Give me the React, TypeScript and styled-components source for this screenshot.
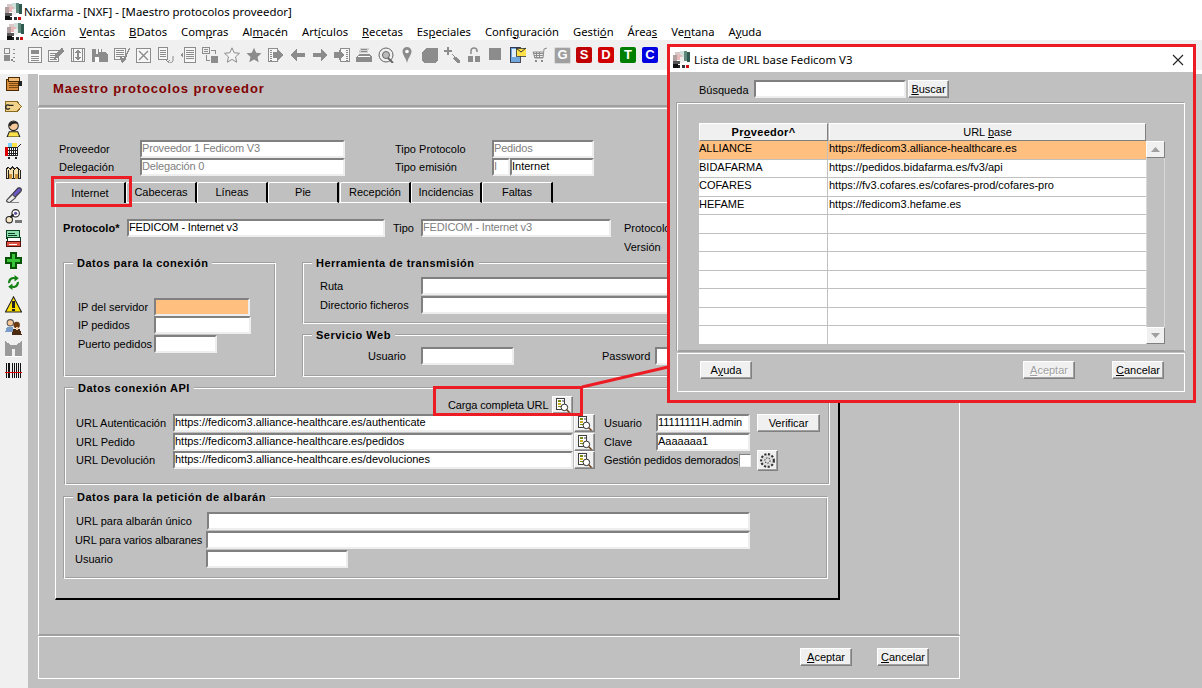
import React from "react";
import styled, { createGlobalStyle } from "styled-components";

const Global = createGlobalStyle`
  html, body { margin: 0; padding: 0; background: #c0c0c0; }
  body { font-family: "Liberation Sans", Arial, sans-serif; font-size: 11px; color: #000; }
  * { box-sizing: border-box; }
`;

const Screen = styled.div`
  position: relative; width: 1202px; height: 688px; overflow: hidden; background: #c0c0c0;
  display: flex; flex-direction: column;
`;
const TitleBar = styled.div`
  height: 22px; background: #fff; display: flex; align-items: center; padding-left: 5px; gap: 2px;
  font: 11.4px "Noto Sans", sans-serif;
`;
const MenuBar = styled.div`
  height: 18px; background: #fff; display: flex; align-items: center; padding-left: 7px;
  font: 11.23px "Noto Sans", sans-serif;
`;
const MenuList = styled.div`display: flex; gap: 14px; margin-left: 7px;`;
const MenuItem = styled.span`white-space: nowrap;`;
const Toolbar = styled.div`
  height: 34px; background: #f0f0f0; display: flex; align-items: center; padding: 0 0 3px 4px;
  border-bottom: 1px solid #fff; box-shadow: inset 0 -3px 0 #fff, inset 0 -2px 0 #000;
  flex: none;
`;
const ToolCell = styled.div`width: 22px; height: 16px; flex: none; display: flex;`;
const Body = styled.div`flex: 1; display: flex; min-height: 0;`;
const Sidebar = styled.div`
  width: 28px; background: #f0f0f0; padding: 2px 0 0 5px; display: flex; flex-direction: column; flex: none;
`;
const SideCell = styled.div`height: 22px; flex: none;`;
const Workspace = styled.div`padding-left: 10px; width: 932px; flex: none;`;

const HeaderPanel = styled.div`
  height: 33px; border: 1px solid #fff; border-bottom: 2px solid #a0a0a0; padding: 6px 0 0 14px;
  color: #800000; font-weight: bold; font-size: 13px; letter-spacing: 0.85px;
`;
const MainPanel = styled.div`
  margin-top: 1px; height: 528px; border: 1px solid #fff; border-bottom: 2px solid #a0a0a0; border-right-color: #fff;
  padding: 31px 0 0 16px;
`;
const FooterPanel = styled.div`
  height: 43px; border: 1px solid #fff; display: flex; justify-content: flex-end; gap: 25px; padding: 11px 30px 0 0;
`;
const TopForm = styled.div`display: grid; grid-template-columns: 81px 205px 50px 97px 102px; margin-left: 4px; grid-auto-rows: 18px;`;
const Gap = styled.span``;
const Row = styled.div<{ $ml?: number; $mt?: number; $h?: number }>`
  display: flex; align-items: center; height: ${p => p.$h ?? 18}px;
  margin-left: ${p => p.$ml ?? 0}px; margin-top: ${p => p.$mt ?? 0}px;
`;
const Label = styled.span<{ $w?: number; $ml?: number; $pt?: number; $tight?: boolean }>`
  flex: none; white-space: nowrap; padding-top: ${p => p.$pt ?? 0}px;
  width: ${p => (p.$w ? p.$w + "px" : "auto")}; margin-left: ${p => p.$ml ?? 0}px;
  letter-spacing: ${p => (p.$tight ? "-0.13px" : "0")};
`;
const BoldLabel = styled(Label)`font-weight: bold; letter-spacing: 0.1px;`;
const Input = styled.div<{ $w?: number; $ml?: number; $bg?: string; $muted?: boolean; $tight?: boolean }>`
  flex: none; height: 18px; width: ${p => (p.$w ? p.$w + "px" : "100%")}; margin-left: ${p => p.$ml ?? 0}px;
  background: ${p => p.$bg ?? "#fff"}; color: ${p => (p.$muted ? "#808080" : "#000")};
  border-style: solid; border-width: 2px; border-color: #808080 #eee #eee #808080;
  line-height: 13px; padding-left: 0; white-space: nowrap; overflow: hidden;
  letter-spacing: ${p => (p.$muted || p.$tight ? "-0.17px" : "0")};
`;
const Tabs = styled.div`display: flex; margin-top: 6px; height: 21px; position: relative; z-index: 1;`;
const Tab = styled.div<{ $w: number; $active?: boolean; $ml?: number }>`
  width: ${p => p.$w}px; margin-left: ${p => p.$ml ?? 0}px; height: 21px; flex: none;
  border-top: 1px solid #fff; border-left: 1px solid #fff; border-right: 2px solid #000;
  border-top-left-radius: 2px; border-bottom: ${p => (p.$active ? "none" : "1px solid #fff")};
  background: #c0c0c0; display: flex; align-items: center; justify-content: center; padding-bottom: 1px;
`;
const TabPage = styled.div`
  width: 785px; height: 398px; margin-top: -1px; border: 1px solid #fff; border-right: 2px solid #000; border-bottom: 2px solid #000;
  padding: 16px 0 0 8px;
`;
const Columns = styled.div`display: flex; gap: 27px; margin-top: 7px; align-items: flex-start;`;
const RightColumn = styled.div`display: flex; flex-direction: column; gap: 11px;`;
const Group = styled.div<{ $w: number; $h: number; $ml?: number; $mt?: number; $pl?: number; $pt?: number }>`
  position: relative; width: ${p => p.$w}px; height: ${p => p.$h}px; margin-left: ${p => p.$ml ?? 0}px; margin-top: ${p => p.$mt ?? 0}px;
  padding: ${p => p.$pt ?? 0}px 0 0 ${p => p.$pl ?? 0}px;
  border: 1px solid #fff; box-shadow: -1px -1px 0 #a0a0a0, inset -1px -1px 0 #a0a0a0;
`;
const Legend = styled.span`
  position: absolute; left: 8px; top: -8px; background: #c0c0c0; padding: 0 4px; font-weight: bold; letter-spacing: 0.5px; line-height: 14px; white-space: nowrap;
`;
const Btn = styled.div<{ $w: number; $h?: number; $ml?: number; $disabled?: boolean; $push?: boolean }>`
  width: ${p => p.$w}px; height: ${p => p.$h ?? 18}px; margin-left: ${p => (p.$push ? "auto" : (p.$ml ?? 0) + "px")}; flex: none;
  background: #f0f0f0; border: 1px solid; border-color: #fff #808080 #808080 #fff;
  box-shadow: inset -1px -1px 0 #a0a0a0;
  display: flex; align-items: center; justify-content: center; white-space: nowrap;
  color: ${p => (p.$disabled ? "#a0a0a0" : "#000")};
  text-shadow: ${p => (p.$disabled ? "1px 1px 0 #fff" : "none")};
`;
const Check = styled.div`width: 12px; height: 13px; flex: none; background: #fff; border: 1px solid; border-color: #808080 #eee #eee #808080;`;

/* Dialog */
const Dialog = styled.div`
  position: absolute; left: 667px; top: 44px; width: 529px; height: 359px; border: 3px solid #ed1c24;
  background: #c0c0c0; z-index: 5; display: flex; flex-direction: column;
`;
const DialogTitle = styled.div`
  height: 25px; background: #fff; display: flex; align-items: center; padding: 0 9px 0 3px; gap: 4px; flex: none;
  font: 11.4px "Noto Sans", sans-serif;
`;
const Close = styled.svg`margin-left: auto; width: 12px; height: 12px;`;
const SearchRow = styled.div`display: flex; margin: 8px 0 0 29px; align-items: center; height: 18px;`;
const DialogPanel = styled.div`
  margin: 5px 0 0 7px; width: 508px; height: 249px; border: 1px solid #fff; border-bottom: 2px solid #a0a0a0;
  box-shadow: -1px -1px 0 #a0a0a0; padding: 19px 0 0 21px; display: flex; align-items: flex-start;
`;
const DialogFooter = styled.div`
  margin: 1px 0 0 7px; width: 508px; height: 39px; border: 1px solid #fff; padding: 7px 20px 0 22px; display: flex; gap: 37px;
`;
const Table = styled.div`width: 447px; display: flex; flex-direction: column;`;
const HeadRow = styled.div`display: grid; grid-template-columns: 129px 317px; height: 18px; gap: 1px;`;
const Head = styled.div<{ $bold?: boolean }>`
  background: #f0f0f0; border: 1px solid; border-color: #fff #808080 #808080 #fff; display: flex; align-items: center; justify-content: center;
  font-weight: ${p => (p.$bold ? "bold" : "normal")}; letter-spacing: ${p => (p.$bold ? "0.3px" : "0")};
`;
const GridBody = styled.div`height: 203px; display: flex; flex-direction: column;`;
const GridRow = styled.div<{ $sel?: boolean }>`
  flex: 1; display: grid; grid-template-columns: 129px 1fr; background: ${p => (p.$sel ? "#ffbf7f" : "#fff")};
  border-bottom: 1px solid #c0c0c0; &:last-child { border-bottom: none; } line-height: 13px; padding-top: 1px;
`;
const Cell = styled.div`
  white-space: nowrap; overflow: hidden; margin-top: -1px; padding-top: 1px;
  &:first-child { border-right: 1px solid #c0c0c0; }
  &:last-child { padding-left: 1px; }
`;
const Scroll = styled.div`
  width: 19px; height: 203px; margin-top: 18px; flex: none; display: flex; flex-direction: column; justify-content: space-between;
  border-right: 1px solid #d8d8d8; border-left: 1px solid #d8d8d8;
`;
const ScrollBtn = styled.div`
  height: 17px; background: #f0f0f0; border: 1px solid; border-color: #fff #808080 #808080 #fff; display: flex; align-items: center; justify-content: center; margin: 0 -1px;
`;

const Annotations = styled.svg`position: absolute; left: 0; top: 0; width: 1202px; height: 688px; z-index: 4; pointer-events: none;`;

/* Icons */
const Ic = ({ children, w = 16, h = 16 }: { children: React.ReactNode; w?: number; h?: number }) => (
  <svg width={w} height={h} viewBox="0 0 16 16" shapeRendering="crispEdges" style={{ flex: "none", display: "block" }}>{children}</svg>
);
const G = "#8c8c8c";
const W = "#fff";

const Logo = () => (
  <Ic w={17} h={17}>
    <rect x="0" y="0" width="16" height="16" fill="#fff" />
    <rect x="2" y="1" width="5" height="3" fill="#d8c8c8" />
    <rect x="7" y="0" width="3" height="6" fill="#cfe0dc" />
    <rect x="10" y="0" width="3" height="9" fill="#5f8a7c" />
    <rect x="13" y="1" width="3" height="9" fill="#2f5a50" />
    <rect x="0" y="4" width="4" height="5" fill="#b0a0a0" />
    <rect x="4" y="4" width="4" height="4" fill="#e8b8b8" />
    <rect x="7" y="6" width="3" height="5" fill="#eee" />
    <rect x="0" y="9" width="7" height="3" fill="#555" />
    <rect x="0" y="12" width="5" height="4" fill="#111" />
    <rect x="5" y="13" width="2" height="3" fill="#222" />
    <rect x="8" y="13" width="3" height="3" fill="#333" />
    <rect x="12" y="13" width="3" height="3" fill="#d01010" />
  </Ic>
);
const Lines = ({ x, y, w, n, gap = 2 }: { x: number; y: number; w: number; n: number; gap?: number }) => (
  <>{Array.from({ length: n }).map((_, i) => <rect key={i} x={x} y={y + i * gap} width={w} height="1" fill={G} />)}</>
);
const Frame = ({ x, y, w, h }: { x: number; y: number; w: number; h: number }) => (
  <rect x={x + 0.5} y={y + 0.5} width={w - 1} height={h - 1} fill="#f7f7f7" stroke={G} />
);
const Pix = ({ d, f = G }: { d: string; f?: string }) => <path d={d} fill={f} />;

const toolIcons: React.ReactNode[] = [
  <><rect x="0.5" y="1.5" width="5" height="5" fill="none" stroke={G} /><rect x="0" y="8" width="6" height="6" fill={G} /><Lines x={9} y={2} w={2} n={4} gap={4} /><rect x="7" y="12" width="2" height="2" fill={G} /></>,
  <g transform="translate(2 0)"><Frame x={0} y={0} w={14} h={16} /><rect x="3" y="3" width="8" height="4" fill={G} /><Lines x={3} y={9} w={8} n={3} /></g>,
  <><Frame x={0} y={3} w={11} h={12} /><Lines x={2} y={6} w={7} n={4} /><Pix d="M15 1l1 3-7 7-3 1 1-4 6-7z" /></>,
  <><Frame x={1} y={1} w={14} h={14} /><rect x="3" y="2" width="1" height="12" fill={G} /><rect x="12" y="2" width="1" height="12" fill={G} /><Pix d="M8 2l3 4H9v4h2l-3 4-3-4h2V6H5z" /></>,
  <><Pix d="M0 2h4v5h2V2h4v3h3l3 3v7H0z" /><rect x="3" y="10" width="4" height="5" fill={W} /><rect x="7" y="2" width="2" height="3" fill={W} /></>,
  <><Frame x={0} y={1} w={12} h={12} /><Lines x={2} y={3} w={8} n={4} /><Pix d="M15 1l1 1-6 13-2 1-2-6 2-1 1 3z" /></>,
  <><Frame x={0} y={1} w={15} h={15} /><path d="M3 4l9 9M12 4l-9 9" stroke={G} strokeWidth="1.4" shapeRendering="auto" /></>,
  <><Frame x={0} y={0} w={10} h={13} /><Lines x={2} y={3} w={6} n={4} /><path d="M15 9v3a3 3 0 0 1-5 3M8 13l2 2 2-2" stroke={G} fill="none" shapeRendering="auto" /></>,
  <><Frame x={4} y={0} w={12} h={16} /><Lines x={6} y={3} w={8} n={5} /><Pix d="M0 8l3-3v6z" /></>,
  <><rect x="0.5" y="0.5" width="7" height="6" fill="none" stroke={G} /><Lines x={2} y={2} w={4} n={2} /><rect x="9" y="9" width="7" height="7" fill={G} /><path d="M4 8v5h4M9 3h4v4" stroke={G} fill="none" /></>,
  <path d="M8 .8l2.2 5 5.3.5-4 3.6 1.2 5.3L8 12.4l-4.7 2.8 1.2-5.3-4-3.6 5.3-.5z" fill="#f4f4f4" stroke={G} shapeRendering="auto" />,
  <path d="M8 .8l2.2 5 5.3.5-4 3.6 1.2 5.3L8 12.4l-4.7 2.8 1.2-5.3-4-3.6 5.3-.5z" fill={G} shapeRendering="auto" />,
  <><Frame x={0} y={1} w={10} h={14} /><Lines x={2} y={3} w={2} n={6} /><Pix d="M5 5h4V2l6 6-6 6v-3H5z" /></>,
  <Pix d="M0 8l7-6v4h8v4H7v4z" />,
  <Pix d="M16 8L9 2v4H1v4h8v4z" />,
  <><Frame x={6} y={1} w={10} h={14} /><Lines x={12} y={3} w={2} n={6} /><Pix d="M0 5h5V2l5 6-5 6v-3H0z" /></>,
  <><Pix d="M3 7h10l3 3v5H0v-5z" /><Pix d="M4 1h9l-1 5H3z" f="#d0d0d0" /><Lines x={5} y={2} w={6} n={2} /><rect x="2" y="9" width="12" height="1" fill={W} /></>,
  <><circle cx="8" cy="8" r="7" fill="#efefef" stroke="#666" shapeRendering="auto" /><circle cx="8" cy="8" r="3.5" fill="#bbb" stroke="#666" shapeRendering="auto" /><path d="M10 11l5 5" stroke="#666" strokeWidth="2" shapeRendering="auto" /></>,
  <g transform="translate(-1 0)"><path d="M8 0a4.5 4.5 0 0 1 4.5 4.5C12.5 8 9 11 8 16 7 11 3.5 8 3.5 4.5A4.5 4.5 0 0 1 8 0z" fill={G} shapeRendering="auto" /><circle cx="8" cy="4.5" r="1.8" fill={W} shapeRendering="auto" /></g>,
  <Pix d="M4 1h11l1 1v11l-3 3H2L0 14V6z" />,
  <><Pix d="M3 0h2v3h3v2H5v3H3V5H0V3h3z" /><Pix d="M8 7l3 3 1-1 4 5v2h-3l-4-5 1-1-3-3z" /></>,
  <><Pix d="M2 9h5v6H2zM9 9h5v6H9z" /><path d="M5 7V4a3 3 0 0 1 6 0v1" stroke={G} strokeWidth="1.5" fill="none" shapeRendering="auto" /></>,
  <rect x="1" y="1" width="12" height="12" fill={G} />,
  <><rect x="0" y="0" width="10" height="15" fill="#6fa8dc" stroke="#223" strokeWidth=".8" /><rect x="1.5" y="2" width="7" height="8" fill="#dfeefc" /><rect x="6" y="1" width="10" height="8" fill="#ffe14a" stroke="#333" strokeWidth=".8" /><path d="M6 1l5 4 5-4" stroke="#333" fill="none" shapeRendering="auto" /></>,
  <><path d="M15 1l-3 1-1 9H3L1 5h10" stroke={G} fill="none" shapeRendering="auto" /><Lines x={2} y={6} w={9} n={3} /><rect x="4" y="5" width="1" height="6" fill={G} /><rect x="7" y="5" width="1" height="6" fill={G} /><rect x="3" y="13" width="2" height="2" fill={G} /><rect x="9" y="13" width="2" height="2" fill={G} /></>,
];

const BadgeBox = styled.div<{ $c: string }>`
  width: 16px; height: 16px; background: ${p => p.$c}; border-radius: 2px; color: #fff; font: bold 13px/16px "Liberation Sans", sans-serif; text-align: center;
`;
const BadgeG = styled(BadgeBox)`width: 17px; height: 17px; border: 1px solid #d8d8d8; line-height: 14px;`;

const sideIcons: React.ReactNode[] = [
  <><rect x="1" y="3" width="12" height="11" fill="#d98c3a" stroke="#4a2a00" /><rect x="3" y="1" width="11" height="4" fill="#f2bb78" stroke="#4a2a00" /><path d="M4 7h8M4 9h8M4 11h8" stroke="#7a4a10" /><rect x="13" y="5" width="3" height="4" fill="#222" /></>,
  <><path d="M.5 3.5h11l4 4.5-4 4.5H.5z" fill="#f2d38c" stroke="#8a6a20" /><path d="M8 7H4a2 2 0 1 0 .5 2.5" fill="none" stroke="#222" strokeWidth="1.2" shapeRendering="auto" /></>,
  <><circle cx="8" cy="5.5" r="4.5" fill="#f7c99a" stroke="#222" shapeRendering="auto" /><path d="M3.5 5C4 1 12 0 12.5 4 10 3 7 3 5 6z" fill="#222" shapeRendering="auto" /><path d="M2 16l2-5h8l2 5z" fill="#ffe14a" stroke="#222" shapeRendering="auto" /></>,
  <><rect x="2" y="5" width="10" height="8" fill="#fff" stroke="#222" /><path d="M4 5v8M6 5v8M8 5v8M10 5v8M2 8h10M2 10.5h10" stroke="#222" /><rect x="3" y="1" width="4" height="4" fill="#7fd0ff" /><rect x="7" y="1" width="4" height="4" fill="#ffe14a" /><rect x="0" y="5" width="3" height="8" fill="#d00" /><path d="M12 5l3-3" stroke="#222" /><rect x="3" y="14" width="2" height="2" fill="#222" /><rect x="9" y="14" width="2" height="2" fill="#222" /></>,
  <><path d="M1 14V5l2-2 2 2 2-2 2 2 2-2 2 2 2 1v8z" fill="#f6dfa8" stroke="#222" /><rect x="4" y="9" width="3" height="5" fill="#c9923f" /><rect x="9" y="9" width="3" height="5" fill="#c9923f" /><path d="M3 6v8M8 6v8M13 6v8" stroke="#222" /></>,
  <><path d="M2 13L12 2c3-1 4 1 3 3L5 15c-3 1-4-1-3-2z" fill="#6a5bc2" stroke="#333" shapeRendering="auto" /><path d="M2 13l5-5 3 3-5 4c-3 1-4-1-3-2z" fill="#eee" stroke="#555" shapeRendering="auto" /><path d="M6 15h8l-2 1H5z" fill="#888" /></>,
  <><circle cx="4" cy="11" r="3" fill="#f6e7c8" stroke="#222" shapeRendering="auto" /><circle cx="10" cy="5" r="3.5" fill="#fff" stroke="#222" shapeRendering="auto" /><circle cx="10" cy="5" r="1.5" fill="#5a4fa0" shapeRendering="auto" /><path d="M5 9l3-3" stroke="#222" strokeWidth="2" shapeRendering="auto" /><rect x="9" y="11" width="7" height="3" fill="#777" /></>,
  <><rect x="1" y="0.5" width="13" height="7" fill="#8fe0b0" stroke="#0a4020" /><path d="M3 3h6M3 5h8" stroke="#0a4020" /><rect x="2" y="7" width="13" height="4" fill="#fff" stroke="#0a4020" /><rect x="1" y="11" width="14" height="4.5" fill="#e05040" stroke="#501010" /><rect x="4" y="13" width="7" height="1" fill="#fff" /></>,
  <path d="M5.5 1h5v4.5H15v5h-4.5V15h-5v-4.5H1v-5h4.5z" fill="#37c437" stroke="#055505" strokeWidth="1.5" />,
  <><path d="M3 9a5 5 0 0 1 6-6V1l4 3-4 3V5a3 3 0 0 0-4 3z" fill="#128012" shapeRendering="auto" /><path d="M13 7a5 5 0 0 1-6 6v2l-4-3 4-3v2a3 3 0 0 0 4-3z" fill="#128012" shapeRendering="auto" /></>,
  <><path d="M8 .8L15.5 15H.5z" fill="#ffe100" stroke="#222" shapeRendering="auto" /><rect x="7" y="5" width="2" height="6" fill="#222" /><rect x="7" y="12" width="2" height="2" fill="#222" /></>,
  <><circle cx="5" cy="4.5" r="3" fill="#f7c99a" stroke="#555" shapeRendering="auto" /><path d="M0 13l2-5h5l2 5z" fill="#7a9cc8" /><circle cx="11" cy="6.5" r="3" fill="#6b3a10" shapeRendering="auto" /><path d="M6 16l2-6h6l2 6z" fill="#4a2a10" /><rect x="10" y="8" width="2" height="3" fill="#f7c99a" /></>,
  <><Pix d="M0 1l6 4h4l6-4v7H0z" f="#9a9a9a" /><Pix d="M0 8h7v7H0zM9 8h7v7H9z" f="#9a9a9a" /><rect x="0" y="15" width="16" height="1" fill={W} /></>,
  <><path d="M1 1v14M3 1v14M4.5 1v14M7 1v14M9 1v14M11 1v14M13 1v14M15 1v14" stroke="#111" /><rect x="0" y="9" width="16" height="1" fill="#d00" /></>,
];

const LookupIcon = () => (
  <Ic w={15} h={15}>
    <rect x="1.5" y="0.5" width="9" height="12" fill="#fff" stroke="#333" />
    <rect x="3" y="2" width="3" height="2" fill="#7a8a10" /><rect x="3" y="5" width="3" height="2" fill="#d0b020" /><rect x="7" y="2" width="3" height="2" fill="#99a" /><rect x="3" y="8" width="3" height="2" fill="#7a8a10" />
    <circle cx="10" cy="10" r="3.5" fill="#fff" stroke="#222" shapeRendering="auto" />
    <path d="M12.5 12.5l3 3" stroke="#6a3a10" strokeWidth="1.5" shapeRendering="auto" />
  </Ic>
);
const GearIcon = () => (
  <Ic w={17} h={17}>
    <circle cx="8" cy="8" r="6" fill="#e0e0e0" stroke="#333" strokeDasharray="2 1.5" strokeWidth="2" shapeRendering="auto" />
    <circle cx="8" cy="8" r="2.5" fill="none" stroke="#555" strokeDasharray="1.5 1" shapeRendering="auto" />
  </Ic>
);

const menu: [string, string, string][] = [
  ["Ac", "c", "ión"], ["", "V", "entas"], ["", "B", "Datos"], ["Com", "p", "ras"], ["Al", "m", "acén"], ["Art", "í", "culos"],
  ["", "R", "ecetas"], ["Es", "p", "eciales"], ["Confi", "g", "uración"], ["Gesti", "ó", "n"], ["Área", "s", ""], ["Ve", "n", "tana"], ["A", "y", "uda"],
];

const rows: [string, string][] = [
  ["ALLIANCE", "https://fedicom3.alliance-healthcare.es"],
  ["BIDAFARMA", "https://pedidos.bidafarma.es/fv3/api"],
  ["COFARES", "https://fv3.cofares.es/cofares-prod/cofares-pro"],
  ["HEFAME", "https://fedicom3.hefame.es"],
  ["", ""], ["", ""], ["", ""], ["", ""], ["", ""], ["", ""], ["", ""],
];

export default function App() {
  return (
    <Screen>
      <Global />
      <TitleBar><Logo /><span>Nixfarma - [NXF] - [Maestro protocolos proveedor]</span></TitleBar>
      <MenuBar>
        <Logo />
        <MenuList>
          {menu.map(([a, b, c], i) => <MenuItem key={i}>{a}<u>{b}</u>{c}</MenuItem>)}
        </MenuList>
      </MenuBar>
      <Toolbar>
        {toolIcons.map((icon, i) => <ToolCell key={i}><Ic>{icon}</Ic></ToolCell>)}
        <ToolCell><BadgeG $c="#a0a0a0">G</BadgeG></ToolCell>
        <ToolCell><BadgeBox $c="#c00000">S</BadgeBox></ToolCell>
        <ToolCell><BadgeBox $c="#d00000">D</BadgeBox></ToolCell>
        <ToolCell><BadgeBox $c="#008000">T</BadgeBox></ToolCell>
        <ToolCell><BadgeBox $c="#0000e0">C</BadgeBox></ToolCell>
      </Toolbar>
      <Body>
        <Sidebar>{sideIcons.map((icon, i) => <SideCell key={i}><Ic w={17} h={17}>{icon}</Ic></SideCell>)}</Sidebar>
        <Workspace>
          <HeaderPanel>Maestro protocolos proveedor</HeaderPanel>
          <MainPanel>
            <TopForm>
              <Label $pt={3}>Proveedor</Label><Input $muted>Proveedor 1 Fedicom V3</Input><Gap /><Label $pt={3}>Tipo Protocolo</Label><Input $muted>Pedidos</Input>
              <Label $pt={3}>Delegación</Label><Input $muted>Delegación 0</Input><Gap /><Label $pt={3}>Tipo emisión</Label>
              <Row><Input $w={18} $muted>I</Input><Input $w={84}>Internet</Input></Row>
            </TopForm>
            <Tabs>
              <Tab $w={71} $active>Internet</Tab><Tab $w={71}>Cabeceras</Tab><Tab $w={71}>Líneas</Tab><Tab $w={71}>Pie</Tab>
              <Tab $w={71} $ml={1}>Recepción</Tab><Tab $w={71}>Incidencias</Tab><Tab $w={71}>Faltas</Tab>
            </Tabs>
            <TabPage>
              <Row $ml={-1}>
                <BoldLabel $w={64}>Protocolo*</BoldLabel><Input $w={258} $tight>FEDICOM - Internet v3</Input>
                <Label $w={28} $ml={8}>Tipo</Label><Input $w={190} $muted>FEDICOM - Internet v3</Input>
                <Label $ml={13}>Protocolo</Label>
              </Row>
              <Row $ml={560} $mt={1}><Label>Versión</Label></Row>
              <Columns>
                <Group $w={212} $h={114} $pt={34} $pl={13}>
                  <Legend>Datos para la conexión</Legend>
                  <Row><Label $w={76}>IP del servidor</Label><Input $w={96} $bg="#ffbf7f" /></Row>
                  <Row><Label $w={76}>IP pedidos</Label><Input $w={97} /></Row>
                  <Row $mt={1}><Label $w={76}>Puerto pedidos</Label><Input $w={63} /></Row>
                </Group>
                <RightColumn>
                  <Group $w={525} $h={61} $pt={13} $pl={16}>
                    <Legend>Herramienta de transmisión</Legend>
                    <Row><Label $w={101}>Ruta</Label><Input $w={400} /></Row>
                    <Row $mt={1}><Label $w={101}>Directorio ficheros</Label><Input $w={400} /></Row>
                  </Group>
                  <Group $w={525} $h={42} $pt={11} $pl={64}>
                    <Legend>Servicio Web</Legend>
                    <Row><Label $w={53}>Usuario</Label><Input $w={93} /><Label $w={53} $ml={88}>Password</Label><Input $w={150} /></Row>
                  </Group>
                </RightColumn>
              </Columns>
              <Group $w={765} $h={97} $ml={1} $mt={11} $pt={7} $pl={10}>
                <Legend>Datos conexión API</Legend>
                <Row $ml={372}><Label $w={104} $tight>Carga completa URL</Label><Btn $w={21}><LookupIcon /></Btn></Row>
                <Row>
                  <Label $w={97}>URL Autenticación</Label><Input $w={400}>https://fedicom3.alliance-healthcare.es/authenticate</Input><Btn $w={21} $ml={1}><LookupIcon /></Btn>
                  <Label $w={52} $ml={9}>Usuario</Label><Input $w={94}>11111111H.admin</Input><Btn $w={63} $ml={7}>Verificar</Btn>
                </Row>
                <Row $mt={1}>
                  <Label $w={97}>URL Pedido</Label><Input $w={400}>https://fedicom3.alliance-healthcare.es/pedidos</Input><Btn $w={21} $ml={1}><LookupIcon /></Btn>
                  <Label $w={52} $ml={9}>Clave</Label><Input $w={94}>Aaaaaaa1</Input>
                </Row>
                <Row>
                  <Label $w={97}>URL Devolución</Label><Input $w={400}>https://fedicom3.alliance-healthcare.es/devoluciones</Input><Btn $w={21} $ml={1}><LookupIcon /></Btn>
                  <Label $w={135} $ml={9} $tight>Gestión pedidos demorados</Label><Check /><Btn $w={21} $h={21} $ml={6}><GearIcon /></Btn>
                </Row>
              </Group>
              <Group $w={764} $h={82} $mt={12} $pt={14} $pl={11}>
                <Legend>Datos para la petición de albarán</Legend>
                <Row><Label $w={131}>URL para albarán único</Label><Input $w={543} /></Row>
                <Row $mt={1} $ml={-1}><Label $w={131} $tight>URL para varios albaranes</Label><Input $w={544} /></Row>
                <Row $mt={1} $ml={-1}><Label $w={131}>Usuario</Label><Input $w={142} /></Row>
              </Group>
            </TabPage>
          </MainPanel>
          <FooterPanel>
            <Btn $w={52}><span><u>A</u>ceptar</span></Btn>
            <Btn $w={52}><span><u>C</u>ancelar</span></Btn>
          </FooterPanel>
        </Workspace>
      </Body>

      <Annotations viewBox="0 0 1202 688">
        <rect x="52.5" y="177.5" width="78" height="28" fill="none" stroke="#ed1c24" strokeWidth="3" />
        <rect x="434.5" y="387.5" width="147" height="27" fill="none" stroke="#ed1c24" strokeWidth="3" />
        <line x1="582" y1="387" x2="668" y2="367" stroke="#ed1c24" strokeWidth="3" />
      </Annotations>

      <Dialog>
        <DialogTitle>
          <Logo /><span>Lista de URL base Fedicom V3</span>
          <Close viewBox="0 0 12 12"><path d="M1 1l10 10M11 1L1 11" stroke="#222" strokeWidth="1.1" /></Close>
        </DialogTitle>
        <SearchRow>
          <Label $w={55} $pt={2}>Búsqueda</Label><Input $w={152} />
          <Btn $w={41} $ml={2}><span><u>B</u>uscar</span></Btn>
        </SearchRow>
        <DialogPanel>
          <Table>
            <HeadRow>
              <Head $bold><span>Pr<u>o</u>veedor^</span></Head>
              <Head><span>URL <u>b</u>ase</span></Head>
            </HeadRow>
            <GridBody>
              {rows.map(([a, b], i) => (
                <GridRow key={i} $sel={i === 0}><Cell>{a}</Cell><Cell>{b}</Cell></GridRow>
              ))}
            </GridBody>
          </Table>
          <Scroll>
            <ScrollBtn><svg width="9" height="5" viewBox="0 0 9 5"><path d="M4.5 0L9 5H0z" fill="#a0a0a0" /></svg></ScrollBtn>
            <ScrollBtn><svg width="9" height="5" viewBox="0 0 9 5"><path d="M4.5 5L9 0H0z" fill="#a0a0a0" /></svg></ScrollBtn>
          </Scroll>
        </DialogPanel>
        <DialogFooter>
          <Btn $w={52}><span>A<u>y</u>uda</span></Btn>
          <Btn $w={52} $disabled $push><span><u>A</u>ceptar</span></Btn>
          <Btn $w={52}><span><u>C</u>ancelar</span></Btn>
        </DialogFooter>
      </Dialog>
    </Screen>
  );
}
